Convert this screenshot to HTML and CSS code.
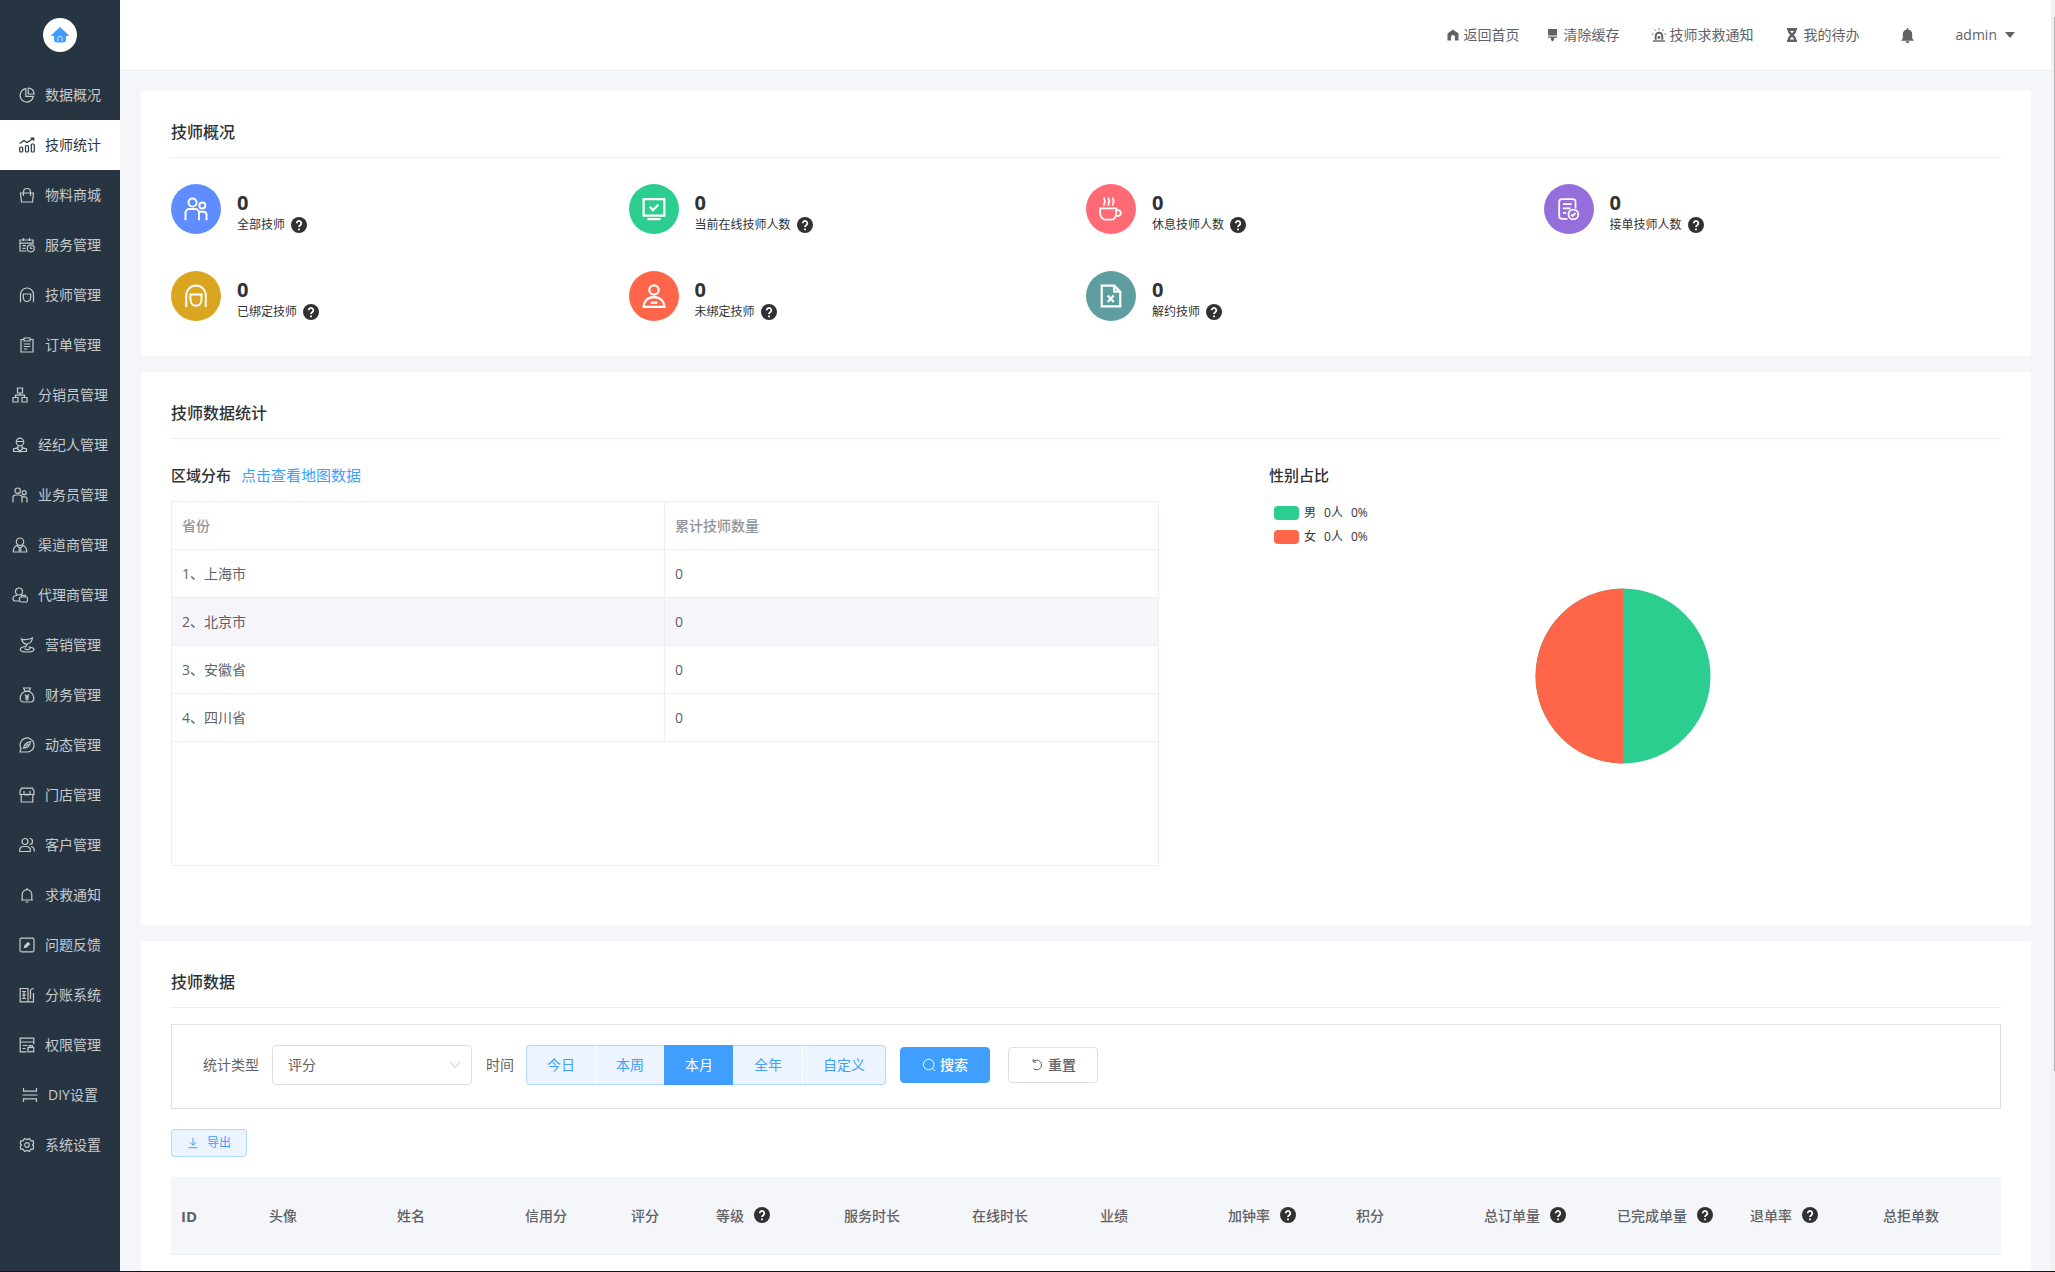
FILE: index.html
```html
<!DOCTYPE html>
<html lang="zh-CN">
<head>
<meta charset="utf-8">
<title>技师统计</title>
<link rel="stylesheet" href="styles.css">
</head>
<body>
<svg class="sprite" aria-hidden="true">
  <symbol id="i-pie" viewBox="0 0 16 16"><path d="M6.800 1.700a6.700 6.700 0 1 0 7.600 7.600H6.800z"/><path d="M9.200 1v6h6A6 6 0 0 0 9.200 1z"/></symbol>
  <symbol id="i-chart" viewBox="0 0 16 16"><path d="M.7 6.500 5 3.500l3 2L14.500 1.500M11.500 1.200h3.200v2.500"/><rect x=".7" y="10" width="3" height="5" rx="1"/><rect x="6.500" y="8.500" width="3" height="6.500" rx="1"/><rect x="12.300" y="7" width="3" height="8" rx="1"/></symbol>
  <symbol id="i-bag" viewBox="0 0 16 16"><path d="M1.500 6h13l-1 9h-11z"/><path d="M4.500 9V5a3.500 3.500 0 0 1 7 0v4"/></symbol>
  <symbol id="i-service" viewBox="0 0 16 16"><path d="M7.500 14H1V3h13v4M1 6.200h13M4.500 1v3M10.500 1v3M3.500 8.700h3.500M3.500 11.300h3"/><circle cx="11.800" cy="11.300" r="3.500"/><path d="M11.800 9.500v2h1.700"/></symbol>
  <symbol id="i-tech" viewBox="0 0 16 16"><path d="M1.500 15.300V7.500a6.500 6.500 0 0 1 13 0v7.800"/><path d="M4.300 7h7.400v3c0 2.500-1.500 4.500-3.700 4.500S4.300 12.500 4.300 10z"/></symbol>
  <symbol id="i-order" viewBox="0 0 16 16"><path d="M5 2.500H2V15h12V2.500h-3M5 1h6v3H5zM4.800 7h6.400M4.800 9.500h6.400M4.800 12h3.500"/></symbol>
  <symbol id="i-tree" viewBox="0 0 16 16"><path d="M5.500 1h5v5h-5zM1 10.500h5V15H1zM10 10.500h5V15h-5zM8 6v2.200M3.500 10.500V8.200h9v2.300"/></symbol>
  <symbol id="i-agent" viewBox="0 0 16 16"><circle cx="8" cy="5" r="3.800"/><path d="M5 4.500h6M6 8.500v2.200L1.500 12v2.500h13V12L10 10.700V8.500M5 11.500 8 14l3-2.500M8 14v1.500"/></symbol>
  <symbol id="i-people" viewBox="0 0 16 16"><circle cx="5.700" cy="3.700" r="2.700"/><circle cx="12.200" cy="5.700" r="2"/><path d="M1 15.500v-5A2.500 2.500 0 0 1 3.500 8h4A2.500 2.500 0 0 1 10 10.500v5M10 9.800h3a2 2 0 0 1 2 2v3.700"/></symbol>
  <symbol id="i-channel" viewBox="0 0 16 16"><circle cx="8" cy="4.700" r="3.700"/><path d="M4.700 8.300C2.500 9.500 1.300 12 1.300 15h13.400c0-3-1.200-5.500-3.400-6.700M4.700 8.300 8 11.500l3.300-3.200M8 11.500V15M6 13h4"/></symbol>
  <symbol id="i-proxy" viewBox="0 0 16 16"><circle cx="7" cy="4.500" r="3.500"/><path d="M5 8.500H4A3 3 0 0 0 1 11.500c0 1.500.8 2.500 2.500 2.500H7"/><rect x="7.500" y="10" width="8" height="5" rx="1.500"/><path d="M9.500 10V8.300h4V10"/></symbol>
  <symbol id="i-market" viewBox="0 0 16 16"><path d="M2.500 2c1.500 1 3 .8 5 .5s4-.8 6-1.500c-.5 3-2 5.500-5.500 6S3.500 5.500 2.500 2zM8 7c0 1.500-1 2-1.700 3.500M6 9.500c-3 .5-4.800 1.500-4.800 3S3.500 15 8 15s7-1 7-2.500-2-2-4.500-2.300c1 1 .5 2-1 2.300s-3 0-4-.7"/></symbol>
  <symbol id="i-money" viewBox="0 0 16 16"><path d="M4.500 1h7L10 4H6zM5.500 4.500h5C13 6 14.800 8.500 14.800 11.300c0 2.500-1.300 3.700-3.300 3.700h-7c-2 0-3.300-1.200-3.300-3.700C1.200 8.500 3 6 5.500 4.500z"/><path d="m6 7.500 2 2.200 2-2.200M8 9.700v4M6 10.200h4M6 12h4"/></symbol>
  <symbol id="i-compass" viewBox="0 0 16 16"><path d="M1 15h7a7 7 0 1 0-6-3.500z"/><path d="M11.500 4.700c-3 .3-6 2-7 6.500 4.500 0 6.500-3 7-6.500zM6.500 9.300l3-2.600"/></symbol>
  <symbol id="i-shop" viewBox="0 0 16 16"><path d="M2.500 1.200h11L15 4v3.500H1V4zM2.200 7.500V15h11.600V7.500M5 4v2.500a1.500 1.500 0 0 0 3 0 1.500 1.500 0 0 0 3 0V4"/></symbol>
  <symbol id="i-users" viewBox="0 0 16 16"><circle cx="6" cy="4.500" r="3"/><path d="M.7 14.500V13A3.500 3.500 0 0 1 4.200 9.500h3.600a3.500 3.500 0 0 1 3.500 3.500v1.500zM10.500 1.500a3 3 0 0 1 0 6M12 9.500c2 .5 3.300 1.800 3.300 3.500v1.500"/></symbol>
  <symbol id="i-bell" viewBox="0 0 16 16"><path d="M2 13h12M3.200 13V7.500a4.800 4.800 0 0 1 9.600 0V13M8 2.700V1M6.500 15h3"/></symbol>
  <symbol id="i-feedback" viewBox="0 0 16 16"><rect x="1" y="1.200" width="14" height="13.600" rx="1.500"/><path d="m5.500 10.500.5-2 3-3 1.500 1.500-3 3z" fill="currentColor"/></symbol>
  <symbol id="i-split" viewBox="0 0 16 16"><path d="M9 1.500H1.200v13.300H9zM3 4.500h4M3 8h4M3 11.500h4M5 4v8M9 14.800h5.500V6M11.500 12V4c0-1.500 1-2.500 3.500-2.500"/></symbol>
  <symbol id="i-perm" viewBox="0 0 16 16"><path d="M7.500 14.800H1.200V1.200h13.600v6M1.200 5h13.600M3.500 8.500h5M3.500 11.500h3"/><rect x="9" y="10.500" width="5.700" height="4.300"/><path d="M10.300 10.500V8.700h3v1.800"/></symbol>
  <symbol id="i-diy" viewBox="0 0 16 16"><path d="M1.500 1v3.200h13V1M.5 8h15M1.500 15v-3.200h13V15"/></symbol>
  <symbol id="i-gear" viewBox="0 0 16 16"><path d="M5.500 1.500 8 2.500l2.500-1 1.300 2.200 2.600.4.200 2.600L13.500 8l1.100 1.300-.2 2.600-2.600.4-1.300 2.200-2.500-1-2.500 1-1.300-2.200-2.600-.4-.2-2.600L2.500 8 1.400 6.700l.2-2.600 2.600-.4z"/><circle cx="8" cy="8" r="2.300"/></symbol>
  <symbol id="i-monitor" viewBox="0 0 22 22"><path d="M1.500 2h19v15h-19zM5 20.300h12M7 9l3 3 5-5"/></symbol>
  <symbol id="i-cup" viewBox="0 0 22 22"><path d="M1 10.500h14.800v4.300c0 3.200-1.800 6-4.300 6H6c-2.500 0-5-2.800-5-6zM15.800 12h2a2.700 2.700 0 0 1 0 5.300h-2.300M5 .5C3.800 2 6.200 3 5.300 4.700S4 7 4.800 8M9 .5C7.800 2 10.200 3 9.300 4.700S8 7 8.800 8M13 .5c-1.200 1.500 1.200 2.500.3 4.200S12 7 12.800 8"/></symbol>
  <symbol id="i-doc" viewBox="0 0 22 22"><path d="M9.500 20H4.500A2.500 2.500 0 0 1 2 17.500v-13A2.500 2.500 0 0 1 4.500 2h10A2.500 2.500 0 0 1 17 4.500v6M5.500 6.500h8M5.500 10.500h7M5.500 14.500h3"/><circle cx="15" cy="16" r="4.500"/><path d="m12.800 16 1.500 1.500 2.700-3"/></symbol>
  <symbol id="i-person" viewBox="0 0 22 22"><circle cx="11" cy="5.500" r="4.300"/><path d="M1.500 21c0-5 3.500-9 9.500-9s9.500 4 9.500 9zM8 17h6"/></symbol>
  <symbol id="i-xfile" viewBox="0 0 22 22"><path d="M2.500 1.500H14l5.500 5.500v13.500h-17zM14 1.500V7h5.500M8 10.500l5.500 6M13.500 10.500l-5.500 6"/></symbol>
  <symbol id="i-home" viewBox="0 0 14 14"><path class="solid" d="M7 1.500 1.500 5.500V12.500H5V9a2 2 0 0 1 4 0v3.500h3.500v-7z"/></symbol>
  <symbol id="i-brush" viewBox="0 0 14 14"><path class="solid" d="M2 1h9v6.500H2zM2 8.500h9v1.300H8V12l-1.500 1.500L5 12V9.800H2z"/></symbol>
  <symbol id="i-siren" viewBox="0 0 14 14"><path class="solid" d="M1 12.300h12v1.400H1z"/><path d="M3.700 11.700V8a3.300 3.300 0 0 1 6.600 0v3.700" stroke-width="2"/><path class="solid" d="M5.800 8h2.400v2.800H5.800z"/><path d="M7 .3v1.900M2.500 1.500l1.200 1.300M11.500 1.500l-1.200 1.300M0 6h1.500M12.500 6H14"/></symbol>
  <symbol id="i-glass" viewBox="0 0 14 14"><path class="solid" fill-rule="evenodd" d="M1 0h10v2.200h-.7c0 2-1 3.500-2.600 4.800 1.600 1.300 2.600 2.800 2.600 4.800h.7V14H1v-2.200h.7c0-2 1-3.500 2.600-4.800-1.600-1.300-2.600-2.800-2.600-4.800H1zM4 3h4L6 5.300zM3.600 11.500h4.800L6 8.700z"/></symbol>
  <symbol id="i-alarm" viewBox="0 0 16 16"><path class="solid" d="M7.300 0h1.400v1.500c2.600.4 4.300 2.500 4.300 5V11l1.800 2.500H1.200L3 11V6.500c0-2.500 1.700-4.600 4.300-5zM6 14.200h4a2 2 0 0 1-4 0z"/></symbol>
  <symbol id="i-help" viewBox="0 0 16 16"><circle class="solid" cx="8" cy="8" r="8"/><path d="M5.700 6.200a2.300 2.300 0 1 1 3.500 2c-.8.500-1.200.8-1.200 1.800M8 11.600v1.700" stroke="#fff" stroke-width="1.800"/></symbol>
  <symbol id="i-search" viewBox="0 0 14 14"><circle cx="6.700" cy="6.500" r="5.300"/><path d="m10.500 10.300 2.700 2.700"/></symbol>
  <symbol id="i-reset" viewBox="0 0 14 14"><path d="M3.500 3.500A4.800 4.800 0 1 1 3.500 10.500M3.200 1v3h3"/></symbol>
  <symbol id="i-down" viewBox="0 0 12 12"><path d="M6 1v7M3 5.300l3 3 3-3M1.500 10.700h9"/></symbol>
</svg>

<div class="app">
  <aside class="sidebar">
    <a class="logo" href="#" aria-label="首页"><svg viewBox="0 0 34 34"><circle cx="17" cy="17" r="17" fill="#fff"/><path d="M17 9.500 8.500 17.500h3V22c0 1.200.8 2 2 2h7c1.200 0 2-.8 2-2v-4.500h3z" fill="#409eff" stroke="#409eff" stroke-linejoin="round"/><path d="M14.800 23v-2.500a2.200 2.200 0 0 1 4.400 0V23" fill="none" stroke="#cfe5ff"/></svg></a>
    <nav class="menu">
      <a href="#"><svg><use href="#i-pie"/></svg>数据概况</a>
      <a href="#" class="active"><svg><use href="#i-chart"/></svg>技师统计</a>
      <a href="#"><svg><use href="#i-bag"/></svg>物料商城</a>
      <a href="#"><svg><use href="#i-service"/></svg>服务管理</a>
      <a href="#"><svg><use href="#i-tech"/></svg>技师管理</a>
      <a href="#"><svg><use href="#i-order"/></svg>订单管理</a>
      <a href="#"><svg><use href="#i-tree"/></svg>分销员管理</a>
      <a href="#"><svg><use href="#i-agent"/></svg>经纪人管理</a>
      <a href="#"><svg><use href="#i-people"/></svg>业务员管理</a>
      <a href="#"><svg><use href="#i-channel"/></svg>渠道商管理</a>
      <a href="#"><svg><use href="#i-proxy"/></svg>代理商管理</a>
      <a href="#"><svg><use href="#i-market"/></svg>营销管理</a>
      <a href="#"><svg><use href="#i-money"/></svg>财务管理</a>
      <a href="#"><svg><use href="#i-compass"/></svg>动态管理</a>
      <a href="#"><svg><use href="#i-shop"/></svg>门店管理</a>
      <a href="#"><svg><use href="#i-users"/></svg>客户管理</a>
      <a href="#"><svg><use href="#i-bell"/></svg>求救通知</a>
      <a href="#"><svg><use href="#i-feedback"/></svg>问题反馈</a>
      <a href="#"><svg><use href="#i-split"/></svg>分账系统</a>
      <a href="#"><svg><use href="#i-perm"/></svg>权限管理</a>
      <a href="#"><svg><use href="#i-diy"/></svg>DIY设置</a>
      <a href="#"><svg><use href="#i-gear"/></svg>系统设置</a>
    </nav>
  </aside>

  <div class="page">
    <header class="topbar">
      <a href="#" class="first"><svg><use href="#i-home"/></svg>返回首页</a>
      <a href="#"><svg><use href="#i-brush"/></svg>清除缓存</a>
      <a href="#"><svg><use href="#i-siren"/></svg>技师求救通知</a>
      <a href="#"><svg><use href="#i-glass"/></svg>我的待办</a>
      <button class="notice" type="button" aria-label="通知"><svg><use href="#i-alarm"/></svg></button>
      <button class="user" type="button">admin<span class="caret"></span></button>
    </header>

    <main class="content">
      <section class="card overview">
        <h2>技师概况</h2>
        <div class="stats">
          <div class="stat"><span class="badge blue thick"><svg><use href="#i-people"/></svg></span><div class="figure"><strong>0</strong><span class="label">全部技师<svg class="help"><use href="#i-help"/></svg></span></div></div>
          <div class="stat"><span class="badge green"><svg><use href="#i-monitor"/></svg></span><div class="figure"><strong>0</strong><span class="label">当前在线技师人数<svg class="help"><use href="#i-help"/></svg></span></div></div>
          <div class="stat"><span class="badge pink"><svg><use href="#i-cup"/></svg></span><div class="figure"><strong>0</strong><span class="label">休息技师人数<svg class="help"><use href="#i-help"/></svg></span></div></div>
          <div class="stat"><span class="badge purple"><svg><use href="#i-doc"/></svg></span><div class="figure"><strong>0</strong><span class="label">接单技师人数<svg class="help"><use href="#i-help"/></svg></span></div></div>
          <div class="stat"><span class="badge gold thick"><svg><use href="#i-tech"/></svg></span><div class="figure"><strong>0</strong><span class="label">已绑定技师<svg class="help"><use href="#i-help"/></svg></span></div></div>
          <div class="stat"><span class="badge tomato"><svg><use href="#i-person"/></svg></span><div class="figure"><strong>0</strong><span class="label">未绑定技师<svg class="help"><use href="#i-help"/></svg></span></div></div>
          <div class="stat"><span class="badge teal"><svg><use href="#i-xfile"/></svg></span><div class="figure"><strong>0</strong><span class="label">解约技师<svg class="help"><use href="#i-help"/></svg></span></div></div>
        </div>
      </section>

      <section class="card analysis">
        <h2>技师数据统计</h2>
        <div class="columns">
          <div class="region">
            <h3>区域分布<a href="#">点击查看地图数据</a></h3>
            <div class="region-box">
              <table>
                <thead><tr><th>省份</th><th>累计技师数量</th></tr></thead>
                <tbody>
                  <tr><td>1、上海市</td><td>0</td></tr>
                  <tr class="hover"><td>2、北京市</td><td>0</td></tr>
                  <tr><td>3、安徽省</td><td>0</td></tr>
                  <tr><td>4、四川省</td><td>0</td></tr>
                </tbody>
              </table>
            </div>
          </div>
          <div class="gender">
            <h3>性别占比</h3>
            <ul class="legend">
              <li><i class="swatch green"></i><span>男</span><span>0人</span><span>0%</span></li>
              <li><i class="swatch tomato"></i><span>女</span><span>0人</span><span>0%</span></li>
            </ul>
            <svg class="pie" viewBox="0 0 176 176" role="img" aria-label="性别占比"><circle cx="88" cy="88" r="87.500" fill="#2bce8f"/><path d="M88 .5a87.500 87.500 0 0 0 0 175z" fill="#ff6549"/></svg>
          </div>
        </div>
      </section>

      <section class="card detail">
        <h2>技师数据</h2>
        <form class="filter">
          <label for="type">统计类型</label>
          <span class="select"><select id="type"><option>评分</option></select><svg viewBox="0 0 12 12"><path d="m1 3 5 5.500L11 3"/></svg></span>
          <span class="time">时间</span>
          <div class="group">
            <button type="button">今日</button><button type="button">本周</button><button type="button" class="on">本月</button><button type="button">全年</button><button type="button">自定义</button>
          </div>
          <button type="button" class="btn primary"><svg><use href="#i-search"/></svg>搜索</button>
          <button type="button" class="btn"><svg><use href="#i-reset"/></svg>重置</button>
        </form>
        <button type="button" class="export"><svg><use href="#i-down"/></svg>导出</button>
        <table class="data">
          <colgroup><col class="w88"><col class="w128"><col class="w128"><col class="w106"><col class="w85"><col class="w128"><col class="w128"><col class="w128"><col class="w128"><col class="w128"><col class="w128"><col class="w133"><col class="w133"><col class="w133"><col class="w128"></colgroup>
          <thead><tr>
            <th>ID</th><th>头像</th><th>姓名</th><th>信用分</th><th>评分</th><th>等级<svg class="help"><use href="#i-help"/></svg></th><th>服务时长</th><th>在线时长</th><th>业绩</th><th>加钟率<svg class="help"><use href="#i-help"/></svg></th><th>积分</th><th>总订单量<svg class="help"><use href="#i-help"/></svg></th><th>已完成单量<svg class="help"><use href="#i-help"/></svg></th><th>退单率<svg class="help"><use href="#i-help"/></svg></th><th>总拒单数</th>
          </tr></thead>
        </table>
      </section>
    </main>
  </div>
</div>
<div class="scrollbar"><div class="thumb"></div></div>
<div class="edge"></div>
</body>
</html>
```
FILE: styles.css
```css
* { box-sizing: border-box; }
body {
  margin: 0;
  color: #606266;
  background: #f5f6fa;
  font: 14px/20px "Open Sans", "Noto Sans CJK SC", sans-serif;
}
a { color: inherit; text-decoration: none; }
button, select { font: inherit; color: inherit; cursor: pointer; }
h2, h3, ul { margin: 0; padding: 0; }
h2, h3 { font-weight: 500; }
svg { flex: none; fill: none; stroke: currentColor; }
.solid { fill: currentColor; stroke: none; }
.sprite { position: absolute; width: 0; height: 0; }

.app { display: flex; min-height: 100vh; }

/* sidebar */
.sidebar { flex: none; width: 120px; background: #273543; }
.logo { display: flex; align-items: center; justify-content: center; height: 70px; }
.logo svg { width: 34px; height: 34px; stroke: none; }
.menu a {
  display: flex;
  align-items: center;
  justify-content: center;
  gap: 10px;
  height: 50px;
  color: #c8cbce;
}
.menu svg { width: 16px; height: 16px; stroke-width: 1.2; }
.menu .active { background: #fff; color: #273543; }

/* header */
.page { flex: 1; min-width: 0; display: flex; flex-direction: column; }
.topbar {
  display: flex;
  align-items: center;
  height: 71px;
  padding-right: 40px;
  justify-content: flex-end;
  background: #fff;
  border-bottom: 1px solid #ebeced;
}
.topbar a { display: flex; align-items: center; gap: 4px; margin-right: 32px; }
.topbar .first { margin-right: 26px; }
.topbar a svg { width: 14px; height: 14px; }
.topbar button { display: flex; align-items: center; padding: 0; border: 0; background: none; }
.notice { margin: 0 41px 0 8px; }
.notice svg { width: 15px; height: 15px; }
.user { gap: 8px; }
.caret { border: 5px solid transparent; border-top: 6px solid #606266; border-bottom: 0; }

/* cards */
.content {
  flex: 1;
  display: flex;
  flex-direction: column;
  gap: 16px;
  padding: 20px 24px 0 21px;
}
.card { padding: 30px; background: #fff; }
.card h2 {
  padding-bottom: 14px;
  margin-bottom: 26px;
  border-bottom: 1px solid #ebeef5;
  color: #303133;
  font-size: 16px;
  line-height: 22px;
}
h3 { color: #303133; font-size: 15px; line-height: 20px; }

/* overview */
.overview { padding-bottom: 35px; }
.stats { display: grid; grid-template-columns: repeat(4, 1fr); row-gap: 37px; }
.stat { display: flex; align-items: center; gap: 16px; color: #303133; }
.badge {
  display: flex;
  align-items: center;
  justify-content: center;
  width: 50px;
  height: 50px;
  border-radius: 50%;
  color: #fff;
}
.badge svg { width: 24px; height: 24px; stroke-width: 2; }
.badge.thick svg { stroke-width: 1.3; }
.badge.purple svg { stroke-width: 1.6; }
.badge.pink svg { stroke-width: 1.6; }
.blue { background: #5f8dff; }
.green { background: #2bce8f; }
.pink { background: #ff6a74; }
.purple { background: #946fdb; }
.gold { background: #daa520; }
.tomato { background: #ff6549; }
.teal { background: #5f9ea0; }
.figure { padding-top: 6px; }
.figure strong { display: block; font-size: 20px; font-weight: 700; line-height: 26px; }
.label { display: flex; align-items: center; gap: 6px; font-size: 12px; line-height: 18px; }
.help { width: 16px; height: 16px; color: #303133; }

/* analysis */
.analysis { padding-bottom: 59px; }
.columns { display: flex; }
.region { width: 60%; padding-right: 6%; }
.region h3 a { margin-left: 10px; color: #409eff; font-weight: 400; }
.region-box { height: 365px; margin-top: 16px; border: 1px solid #ebeef5; }
table { width: 100%; border-collapse: separate; border-spacing: 0; table-layout: fixed; text-align: left; }
.region-box th, .region-box td { height: 48px; padding: 0 10px; border-bottom: 1px solid #ebeef5; }
.region-box th { color: #909399; font-weight: 500; }
.region-box th:first-child, .region-box td:first-child { border-right: 1px solid #ebeef5; }
.region-box .hover { background: #f5f5fa; }
.gender { width: 40%; padding-right: 24px; }
.legend { list-style: none; margin: 16px 0 0 5px; font-size: 12px; color: #333; }
.legend li { display: flex; align-items: center; height: 24px; gap: 8px; }
.swatch { width: 25px; height: 14px; border-radius: 4px; margin-right: -3px; }
.pie { display: block; width: 176px; height: 176px; margin: 39px auto 0; stroke: none; }

/* detail */
.detail { flex: 1; padding-bottom: 0; }
.detail h2 { margin-bottom: 16px; }
.filter {
  display: flex;
  align-items: center;
  height: 85px;
  padding: 0 31px 4px;
  border: 1px solid #dcdfe6;
}
.select { position: relative; width: 200px; margin-left: 13px; }
.select select {
  appearance: none;
  display: block;
  width: 100%;
  height: 40px;
  padding: 0 15px;
  border: 1px solid #dcdfe6;
  border-radius: 4px;
  background: #fff;
}
.select svg { position: absolute; right: 11px; top: 14px; width: 12px; height: 12px; color: #c0c4cc; pointer-events: none; }
.time { margin: 0 12px 0 14px; }
.group { display: flex; }
.group button {
  height: 40px;
  padding: 0 20px;
  border: 1px solid #b3d8ff;
  border-width: 1px 0;
  border-left: 1px solid #fff;
  background: #ecf5ff;
  color: #409eff;
}
.group button:first-child { border-left-color: #b3d8ff; border-radius: 4px 0 0 4px; }
.group button:last-child { border-right: 1px solid #b3d8ff; border-radius: 0 4px 4px 0; }
.group .on { background: #409eff; border-color: #409eff; color: #fff; }
.btn {
  display: flex;
  align-items: center;
  justify-content: center;
  gap: 4px;
  width: 90px;
  height: 36px;
  margin-left: 18px;
  padding: 0;
  border: 1px solid #dcdfe6;
  border-radius: 4px;
  background: #fff;
  font-weight: 500;
}
.btn svg { width: 14px; height: 14px; }
.primary { margin-left: 14px; border-color: #409eff; background: #409eff; color: #fff; }
.export {
  display: flex;
  align-items: center;
  justify-content: center;
  gap: 8px;
  width: 76px;
  height: 28px;
  margin: 20px 0;
  padding: 0;
  border: 1px solid #b3d8ff;
  border-radius: 3px;
  background: #ecf5ff;
  color: #409eff;
  font-size: 12px;
}
.export svg { width: 12px; height: 12px; }
.data th { height: 78px; padding: 0 10px; background: #f5f6fa; border-bottom: 1px solid #ebeef5; font-weight: 500; white-space: nowrap; }
.data th:first-child { font-size: 15px; font-weight: 700; }
.data .help { margin-left: 10px; vertical-align: -2px; }
.w85 { width: 85px; }
.w88 { width: 88px; }
.w106 { width: 106px; }
.w128 { width: 128px; }
.w133 { width: 133px; }

/* overlay scrollbar and bottom edge of the window */
.scrollbar { position: fixed; top: 0; right: 0; bottom: 0; width: 4px; padding: 17px 0 0 3px; background: #f1f1f1; }
.thumb { height: 84%; background: #b5b5b5; }
.edge { position: fixed; left: 0; right: 0; bottom: 0; height: 1px; background: #101418; }
```
